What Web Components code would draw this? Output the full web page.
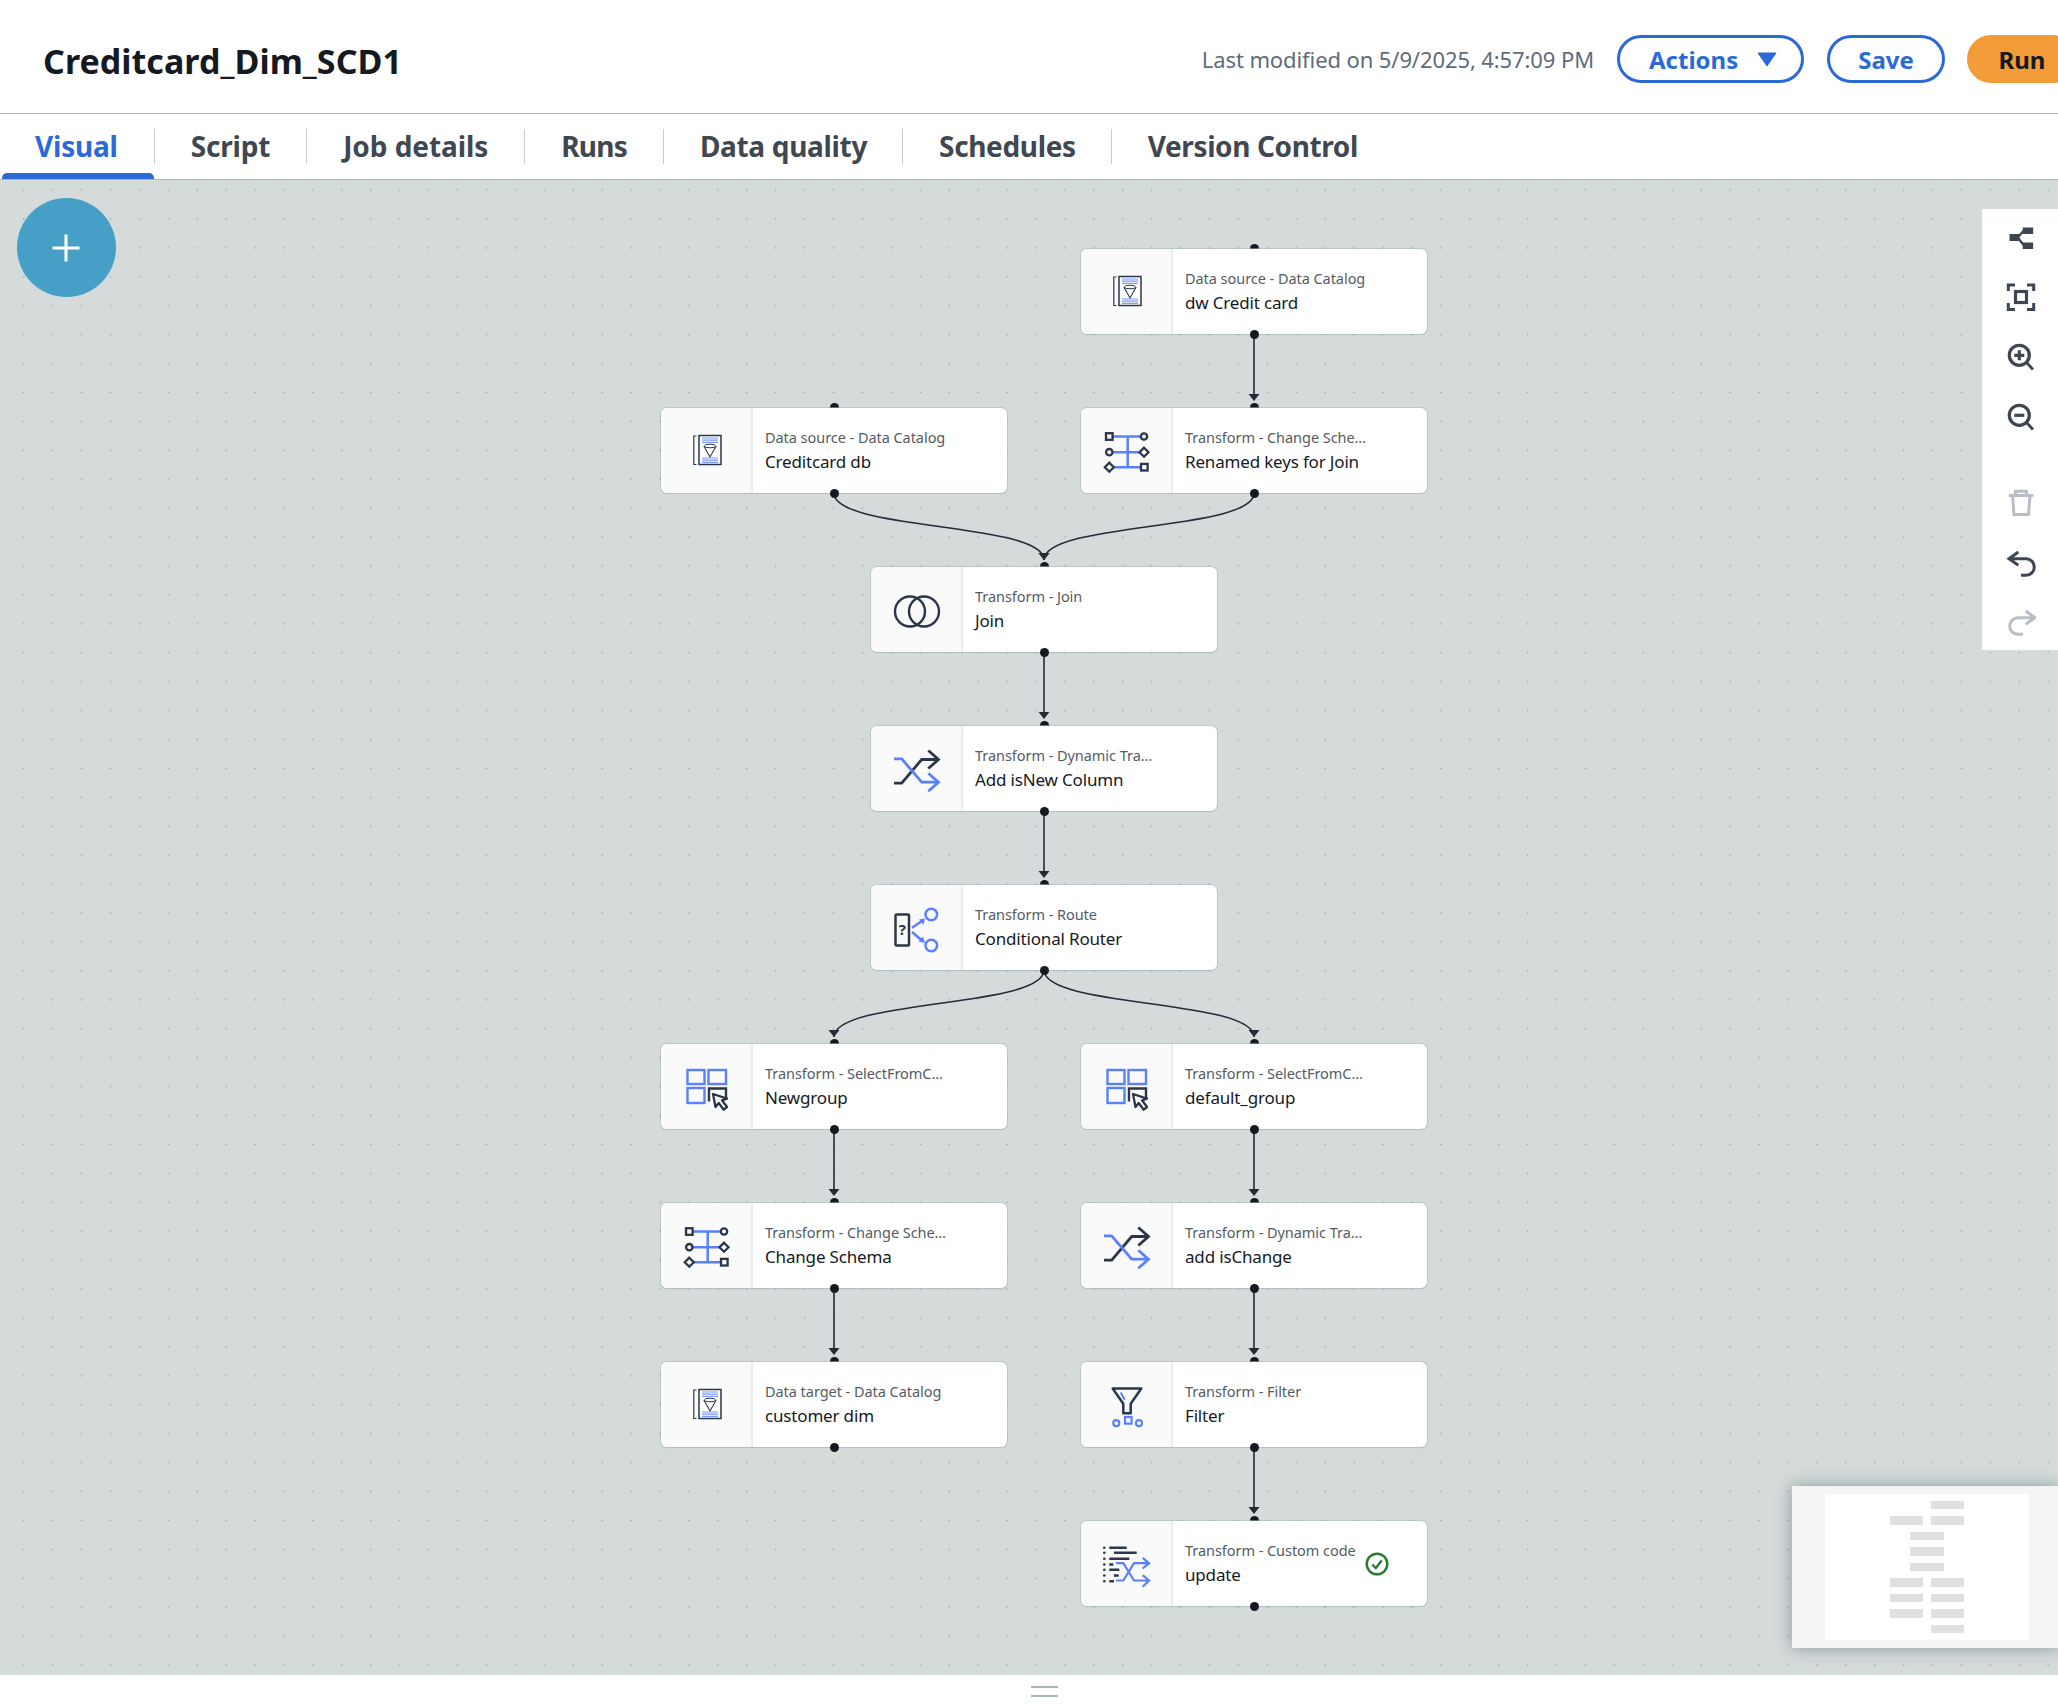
<!DOCTYPE html>
<html lang="en"><head><meta charset="utf-8"><title>Creditcard_Dim_SCD1</title>
<style>
html,body{margin:0;padding:0;background:#fff;width:2058px;height:1708px;overflow:hidden;font-family:"Noto Sans","Liberation Sans",sans-serif}
job-page{display:flex;flex-direction:column;width:2058px;height:1708px}
</style></head><body>
<job-page>
  <job-header title-text="Creditcard_Dim_SCD1" modified="Last modified on 5/9/2025, 4:57:09 PM"></job-header>
  <job-tabs>
    <tab-item active first>Visual</tab-item><tab-sep></tab-sep>
    <tab-item>Script</tab-item><tab-sep></tab-sep>
    <tab-item style="letter-spacing:-.07px">Job details</tab-item><tab-sep></tab-sep>
    <tab-item style="letter-spacing:-.8px">Runs</tab-item><tab-sep></tab-sep>
    <tab-item style="letter-spacing:-.32px;--pr:35px">Data quality</tab-item><tab-sep></tab-sep>
    <tab-item style="letter-spacing:-.35px;--pr:35px">Schedules</tab-item><tab-sep></tab-sep>
    <tab-item style="letter-spacing:-.38px">Version Control</tab-item>
  </job-tabs>
  <flow-canvas>
    <add-button></add-button>
    <flow-edges></flow-edges>
    <flow-node col="2" row="0" icon="catalog" sub="Data source - Data Catalog" name="dw Credit card"></flow-node>
    <flow-node col="0" row="1" icon="catalog" sub="Data source - Data Catalog" name="Creditcard db"></flow-node>
    <flow-node col="2" row="1" icon="schema" sub="Transform - Change Sche…" name="Renamed keys for Join"></flow-node>
    <flow-node col="1" row="2" icon="join" sub="Transform - Join" name="Join"></flow-node>
    <flow-node col="1" row="3" icon="shuffle" sub="Transform - Dynamic Tra…" name="Add isNew Column"></flow-node>
    <flow-node col="1" row="4" icon="router" sub="Transform - Route" name="Conditional Router"></flow-node>
    <flow-node col="0" row="5" icon="select" sub="Transform - SelectFromC…" name="Newgroup"></flow-node>
    <flow-node col="2" row="5" icon="select" sub="Transform - SelectFromC…" name="default_group"></flow-node>
    <flow-node col="0" row="6" icon="schema" sub="Transform - Change Sche…" name="Change Schema"></flow-node>
    <flow-node col="2" row="6" icon="shuffle" sub="Transform - Dynamic Tra…" name="add isChange"></flow-node>
    <flow-node col="0" row="7" icon="catalog" sub="Data target - Data Catalog" name="customer dim"></flow-node>
    <flow-node col="2" row="7" icon="filter" sub="Transform - Filter" name="Filter"></flow-node>
    <flow-node col="2" row="8" icon="code" sub="Transform - Custom code" name="update" status="ok"></flow-node>
    <canvas-tools></canvas-tools>
    <mini-map></mini-map>
  </flow-canvas>
  <resize-grip></resize-grip>
</job-page>
<script>
const D='#2b3648',B='#5b80ff';
function el(name,html){customElements.define(name,class extends HTMLElement{
  connectedCallback(){if(!this.shadowRoot){this.attachShadow({mode:'open'}).innerHTML=html(this)}}
})}
const FONT='"Noto Sans","Liberation Sans",sans-serif';

el('job-header',h=>`<style>
:host{display:flex;align-items:center;flex:none;height:108px;padding-top:5px;border-bottom:1px solid #aab7b8;overflow:hidden;font-family:${FONT};background:#fff}
h1{margin:3px 0 0 43px;font-size:34px;font-weight:700;color:#16191f;letter-spacing:.05px;flex:1;white-space:nowrap}
.mod{font-size:22px;color:#5f6b7a;letter-spacing:-.1px;margin-right:23px;white-space:nowrap}
.btn{box-sizing:border-box;height:48px;border-radius:24px;border:3px solid #2b6ad6;color:#2b6ad6;font-size:24px;font-weight:700;display:flex;align-items:center;justify-content:center;flex:none;background:#fff}
.a{width:187px;gap:19px;justify-content:flex-start;padding-left:29px}.s{width:118px;margin-left:23px}
.r{width:110px;margin:0 -19px 0 22px;background:#f19c38;border-color:#f19c38;color:#16191f}
</style><h1>${h.getAttribute('title-text')}</h1><span class="mod">${h.getAttribute('modified')}</span>
<div class="btn a"><span>Actions</span><svg width="20" height="15" viewBox="0 0 20 15"><path d="M1 1H19L10 14Z" fill="#2b6ad6" stroke="#2b6ad6" stroke-linejoin="round"/></svg></div>
<div class="btn s">Save</div><div class="btn r">Run</div>`);

el('job-tabs',()=>`<style>:host{display:flex;flex:none;height:65px;padding-left:2px;background:#fff;border-bottom:1px solid #aab7b8;align-items:stretch;font-family:${FONT}}</style><slot></slot>`);
el('tab-sep',()=>`<style>:host{display:block;flex:none;width:1px;height:35px;margin-top:15px;background:#c5cccd}</style>`);
el('tab-item',t=>`<style>
:host{display:flex;flex-direction:column;flex:none;font-size:28px;font-weight:700;color:#414750;letter-spacing:-.2px}
.l{flex:1;display:flex;align-items:center;padding:5px var(--pr,36px) 0 36px;white-space:nowrap}
.bar{height:6px;border-radius:5px 5px 0 0;background:transparent}
:host([first]) .l{padding-left:33px}
:host([active]){color:#2b6ad6}:host([active]) .bar{background:#2b6ad6}
</style><div class="l"><slot></slot></div><div class="bar"></div>`);

el('flow-canvas',()=>`<style>
:host{display:block;position:relative;flex:none;height:1495px;overflow:hidden;background-color:#d5dbdb;
background-image:radial-gradient(circle,#98a3a5 0,#a8b2b3 .6px,rgba(213,219,219,0) 1.2px);background-size:28.93px 28.93px;background-position:9.24px -4.46px}
</style><slot></slot>`);

el('add-button',()=>`<style>:host{position:absolute;left:17px;top:18px;width:99px;height:99px;border-radius:50%;background:#469fc6;display:flex;align-items:center;justify-content:center}
svg{margin-right:2px}</style>
<svg width="30" height="30" viewBox="0 0 30 30"><path d="M15 1.500V28.500M1.500 15H28.500" stroke="#fff" stroke-width="3"/></svg>`);

const X=[661,871,1081],Y=r=>249+159*r-180;
el('flow-edges',()=>{
  const V=(x,r,n=1)=>{const y1=Y(r)+85,y2=Y(r+n)-12;return `<path d="M${x} ${y1}V${y2}" fill="none"/>${arrow(x,y2+5)}`};
  const arrow=(x,tip)=>`<path d="M${x-5.5} ${tip-7}H${x+5.5}L${x} ${tip}Z" fill="#232b37" stroke="none"/>`;
  const C=(x1,x2,y1,y2)=>`<path d="M${x1} ${y1}C${x1} ${y1+38} ${x2} ${y2-38} ${x2} ${y2}" fill="none"/>${arrow(x2,y2)}`;
  const a=834,b=1044,c=1254;
  return `<style>:host{position:absolute;inset:0;display:block}svg{display:block}</style>
  <svg width="2058" height="1495" stroke="#232b37" stroke-width="1.6">
  ${V(c,0)}${C(a,b,Y(1)+85,Y(2)-7)}${C(c,b,Y(1)+85,Y(2)-7)}${V(b,2)}${V(b,3)}
  ${C(b,a,Y(4)+85,Y(5)-7)}${C(b,c,Y(4)+85,Y(5)-7)}${V(a,5)}${V(a,6)}${V(c,5)}${V(c,6)}${V(c,7)}
  </svg>`});

const ICON={
catalog:`<path d="M19.500 15H16.800V43.500H19.500" fill="none" stroke="${D}" stroke-width="1.200"/>
<rect x="22" y="14.500" width="22" height="29" fill="#fff" stroke="${D}" stroke-width="1.500"/>
<path d="M25 17H41M25 19.200H41M25 21.400H41M25 37H41M25 39.200H41M25 41.400H41" stroke="${B}" stroke-width="1.200" opacity=".8"/>
<path d="M26.800 25L33 36L39.200 25" fill="none" stroke="${D}" stroke-width="1.100"/><ellipse cx="33" cy="25" rx="5.500" ry="1.800" fill="none" stroke="${D}" stroke-width="1"/>`,
schema:`<path d="M16 15.500H43M16 31.200H43M16 46.200H43M30.700 15.500V46.200" stroke="${B}" stroke-width="2.500" fill="none"/>
<g fill="#fafafa" stroke="${D}" stroke-width="2.300"><rect x="9" y="12.200" width="6.600" height="6.600"/><circle cx="47" cy="15.500" r="3.200"/><circle cx="12.300" cy="31.200" r="3.200"/><path d="M47 26.700L51.500 31.200L47 35.700L42.500 31.200Z"/><path d="M12.300 41.700L16.800 46.200L12.300 50.700L7.800 46.200Z"/><rect x="44" y="42.900" width="6.600" height="6.600"/></g>`,
join:`<g fill="none" stroke="${D}" stroke-width="2.400"><circle cx="23" cy="31.500" r="15"/><circle cx="37" cy="31.500" r="15"/></g>`,
shuffle:`<g fill="none" stroke-width="2.800"><path d="M7 44.200H14.700L34.700 20.500H51M41.300 11.500L51.500 20.500L41.300 29.500" stroke="${D}"/><path d="M7 19.800H14.700L34.700 43.200H51M41.300 34.200L51.500 43.200L41.300 52.200" stroke="${B}"/></g>`,
router:`<rect x="8.500" y="16.500" width="13.500" height="31" rx="1" fill="none" stroke="${D}" stroke-width="2.500"/>
<text x="15.300" y="37" text-anchor="middle" font-family="${FONT.replace(/"/g,"'")}" font-size="15" font-weight="700" fill="${D}">?</text>
<g fill="none" stroke="${B}" stroke-width="2.500"><circle cx="44.300" cy="16.500" r="5.800"/><circle cx="44.300" cy="47.500" r="5.800"/><path d="M25 29.800L35 23M25 34L35 42.500"/></g>
<path d="M38 20.500L36.500 27L32 21.500ZM38 45L31.500 43.500L36 38.500Z" fill="${B}"/>`,
select:`<g fill="none" stroke="${B}" stroke-width="2.400"><rect x="10.500" y="13" width="17" height="14"/><rect x="31.500" y="13" width="17.500" height="14"/><rect x="10.500" y="31" width="17" height="15"/></g>
<path d="M32 44.500V31.500H49V41" fill="none" stroke="${D}" stroke-width="2.400"/>
<path d="M36 37L38.500 50L41.700 46L46.700 52.700L50 50L45 43.300L50 41.700Z" fill="#fafafa" stroke="${D}" stroke-width="2.300" stroke-linejoin="round"/>`,
filter:`<path d="M15.700 13.500H44.300L33.700 28.800V38.200H26.300V28.800Z" fill="none" stroke="${D}" stroke-width="2.500" stroke-linejoin="round"/>
<path d="M23.700 17.500L27.700 24.800" stroke="${B}" stroke-width="2"/>
<g fill="none" stroke="${B}" stroke-width="2.200"><circle cx="19.300" cy="48.200" r="3"/><circle cx="42" cy="48.200" r="3"/><rect x="28" y="42" width="6.600" height="6.600"/></g>`,
code:`<g stroke="${D}" stroke-width="2.400" fill="none"><path d="M12.300 13.800H29.700M17 18.800H39.700M12.300 24.800H32.300M12.300 30.500H16.300M12.300 35.800H22.300M17 41.500H21.700M12.300 47.200H17"/></g>
<g fill="${D}"><circle cx="7.300" cy="13.800" r="1.300"/><circle cx="7.300" cy="18.800" r="1.300"/><circle cx="7.300" cy="24.800" r="1.300"/><circle cx="7.300" cy="30.500" r="1.300"/><circle cx="7.300" cy="35.800" r="1.300"/><circle cx="7.300" cy="41.500" r="1.300"/><circle cx="7.300" cy="47.200" r="1.300"/></g>
<g fill="none" stroke="${B}" stroke-width="2.200"><path d="M19 29.200H26.300L37 46.500H51.500M19 46.500H26.300L37 29.200H51.500M45.700 23.800L52 29.200L45.700 34.500M45.700 41.200L52 46.500L45.700 52.800"/></g>`
};

el('flow-node',n=>{
  const c=+n.getAttribute('col'),r=+n.getAttribute('row');
  const st=n.getAttribute('status');
  return `<style>
  :host{position:absolute;left:${X[c]}px;top:${Y(r)}px;width:346px;height:85px;display:block;z-index:1;font-family:${FONT}}
  .port{position:absolute;left:168.500px;width:9px;height:9px;border-radius:50%;background:#16191f}
  .t{top:-5.500px;z-index:-1}.b{bottom:-4.500px;z-index:2}
  .card{box-sizing:border-box;width:100%;height:100%;display:flex;background:#fff;border-radius:6px;overflow:hidden;box-shadow:0 0 0 1px rgba(170,183,184,.55),0 1px 1px rgba(0,28,36,.1)}
  .ic{flex:none;width:92px;box-sizing:border-box;background:#fafafa;border-right:2px solid #eaeded;display:flex;align-items:center;justify-content:center}
  .ic svg{display:block;flex:none;margin-left:2px}
  .tx{display:flex;flex-direction:column;justify-content:center;padding:0 0 0 12px;white-space:nowrap;min-width:0}
  .sub{font-size:14.500px;line-height:20px;color:#545b64;letter-spacing:-.05px}
  .nm{font-size:17px;line-height:24px;margin-top:3px;color:#16191f;letter-spacing:-.17px}
  .st{margin-left:9px;align-self:center;display:block}
  </style>
  <div class="port t"></div>
  <div class="card"><div class="ic"><svg width="60" height="60" viewBox="0 0 60 60">${ICON[n.getAttribute('icon')]}</svg></div>
  <div class="tx"><div class="sub">${n.getAttribute('sub')}</div><div class="nm">${n.getAttribute('name')}</div></div>
  ${st?`<svg class="st" width="24" height="24" viewBox="0 0 24 24"><circle cx="12" cy="12" r="10.300" fill="none" stroke="#2a7d2e" stroke-width="2.400"/><path d="M7.300 12.500L10.800 16L16.700 8.500" fill="none" stroke="#2a7d2e" stroke-width="2.400"/></svg>`:''}
  </div><div class="port b"></div>`});

const G='#3f4652',L='#b8bdc6';
const T=[
`<g fill="${G}" stroke="${G}"><rect x="3.500" y="12" width="10" height="7" stroke="none"/><rect x="16.700" y="5.500" width="10.500" height="6.500" stroke="none"/><rect x="16.700" y="20.500" width="10.500" height="6.500" stroke="none"/><path d="M12 15L18 8.500M12 16L18 23.500" fill="none" stroke-width="2.400"/></g>`,
`<g fill="none" stroke="${G}" stroke-width="3"><path d="M2.300 9V3H9M21 3H27.700V9M2.300 21V27.500H9M21 27.500H27.700V21"/><rect x="9.500" y="9.500" width="11" height="11" stroke-width="3.200"/></g>`,
`<g fill="none" stroke="${G}" stroke-width="3.200"><circle cx="13.300" cy="14.300" r="10"/><path d="M20.500 21.500L27 28.500" stroke-width="2.800"/><path d="M8.300 14.300H18.300M13.300 9.300V19.300"/></g>`,
`<g fill="none" stroke="${G}" stroke-width="3.200"><circle cx="13.300" cy="14.300" r="10"/><path d="M20.500 21.500L27 28.500" stroke-width="2.800"/><path d="M8.300 14.300H18.300"/></g>`,
`<g fill="none" stroke="${L}" stroke-width="3"><path d="M2.700 7.500H27.300M9.500 7V3.300H20.500V7M6.500 7.500L8 26.500H22.500L24 7.500"/></g>`,
`<path d="M12.300 4L3 10.700L12.300 17.300M3 10.700H20A8 8 0 0 1 20 27.300H15" fill="none" stroke="${G}" stroke-width="3"/>`,
`<path d="M19.700 4L29 10.700L19.700 17.300M29 10.700H12A8 8 0 0 0 12 27.300H17" fill="none" stroke="${L}" stroke-width="3"/>`];
el('canvas-tools',()=>`<style>
:host{position:absolute;left:1982px;top:29px;width:76px;height:441px;box-sizing:border-box;padding-left:2px;background:#fff;display:flex;flex-direction:column;align-items:center;gap:3.500px}
.b{height:56px;display:flex;align-items:center;justify-content:center}.g{margin-top:28px}svg{display:block}
</style>${T.map((s,i)=>`<div class="b${i==4?' g':''}"><svg width="30" height="30" viewBox="0 0 30 30">${s}</svg></div>`).join('')}`);

el('mini-map',()=>{
  const cols=[[65,33],[85,34],[106,33]];
  const rows=[[2],[0,2],[1],[1],[1],[0,2],[0,2],[0,2],[2]];
  const ry=[7,22,38,53,69,84,100,115,131],rh=[8,9,8,9,8,9,8,9,8];
  return `<style>:host{position:absolute;left:1792px;top:1306px;width:266px;height:162px;background:#f5f5f5;box-shadow:0 0 16px rgba(0,28,36,.35);display:block}
  .in{position:absolute;left:33px;top:8px;width:204px;height:146px;background:#fff}
  svg{display:block}</style>
  <div class="in"><svg width="204" height="146">${rows.map((cs,i)=>cs.map(c=>`<rect x="${cols[c][0]}" y="${ry[i]}" width="${cols[c][1]}" height="${rh[i]}" fill="#e0e0e0"/>`).join('')).join('')}</svg></div>`});

el('resize-grip',()=>`<style>:host{display:flex;flex:1;background:#fff;align-items:center;justify-content:center;padding-left:31px}
i{display:block;width:27px;height:7px;border-top:2px solid #aab7b8;border-bottom:2px solid #aab7b8;margin-top:-1px}</style><i></i>`);
</script>
</body></html>
